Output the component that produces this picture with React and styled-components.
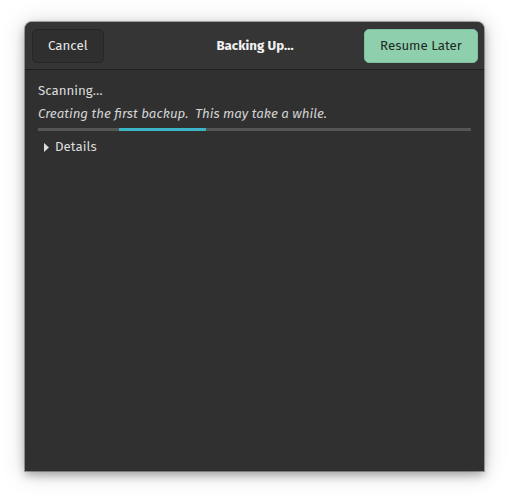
import styled, { createGlobalStyle } from "styled-components";

const GlobalStyle = createGlobalStyle`
  body {
    margin: 0;
    background: #ffffff;
    font-family: "Fira Sans", Lato, "Noto Sans", sans-serif;
  }
`;

const Page = styled.div`
  width: 510px;
  height: 500px;
  padding: 22px 26px 29px 25px;
  box-sizing: border-box;
`;

const Window = styled.div`
  height: 100%;
  display: flex;
  flex-direction: column;
  background: #303030;
  border-radius: 7px 7px 0 0;
  box-shadow: 0 0 0 1px rgba(0, 0, 0, 0.3), 0 4px 10px rgba(0, 0, 0, 0.3),
    0 2px 24px rgba(0, 0, 0, 0.18);
  overflow: hidden;
`;

const HeaderBar = styled.div`
  display: grid;
  grid-template-columns: 1fr auto 1fr;
  align-items: center;
  height: 47px;
  padding: 0 6px 0 7px;
  background: #353535;
  border-bottom: 1px solid #1e1e1e;
`;

const Button = styled.button`
  height: 34px;
  padding: 0 15px;
  border-radius: 5px;
  font-family: inherit;
  font-size: 13.3px;
  cursor: pointer;
  justify-self: ${(p) => (p.$end ? "end" : "start")};
  color: ${(p) => (p.$suggested ? "#1f2a24" : "#e8e8e8")};
  background: ${(p) => (p.$suggested ? "#8ecfae" : "#2f2f2f")};
  border: 1px solid ${(p) => (p.$suggested ? "#7dbf9e" : "#262626")};
`;

const Title = styled.div`
  color: #f2f2f2;
  font-weight: 700;
  font-size: 13.3px;
`;

const Body = styled.div`
  display: flex;
  flex-direction: column;
  padding: 11px 13px 0 13px;
`;

const Status = styled.div`
  color: #dcdcdc;
  font-size: 13.3px;
  line-height: 20px;
`;

const Note = styled.div`
  color: #d4d4d4;
  font-size: 13.3px;
  font-style: italic;
  line-height: 20px;
  margin-top: 3px;
  white-space: pre;
`;

const Track = styled.div`
  position: relative;
  height: 3px;
  margin-top: 4px;
  background: #555555;
`;

const Pulse = styled.div`
  position: absolute;
  top: 0;
  bottom: 0;
  background: #3ab5c6;
`;

const Expander = styled.div`
  display: flex;
  align-items: center;
  gap: 6px;
  margin-top: 6px;
  padding-left: 6px;
  color: #dcdcdc;
  font-size: 13.3px;
  line-height: 20px;
`;

export default function App() {
  return (
    <>
      <GlobalStyle />
      <Page>
        <Window>
          <HeaderBar>
            <Button>Cancel</Button>
            <Title>Backing Up…</Title>
            <Button $suggested $end>
              Resume Later
            </Button>
          </HeaderBar>
          <Body>
            <Status>Scanning…</Status>
            <Note>Creating the first backup.  This may take a while.</Note>
            <Track>
              <Pulse style={{ left: "81px", width: "87px" }} />
            </Track>
            <Expander>
              <svg width="5" height="9" viewBox="0 0 5 9">
                <path d="M0 0 L5 4.5 L0 9 Z" fill="#dcdcdc" />
              </svg>
              Details
            </Expander>
          </Body>
        </Window>
      </Page>
    </>
  );
}
